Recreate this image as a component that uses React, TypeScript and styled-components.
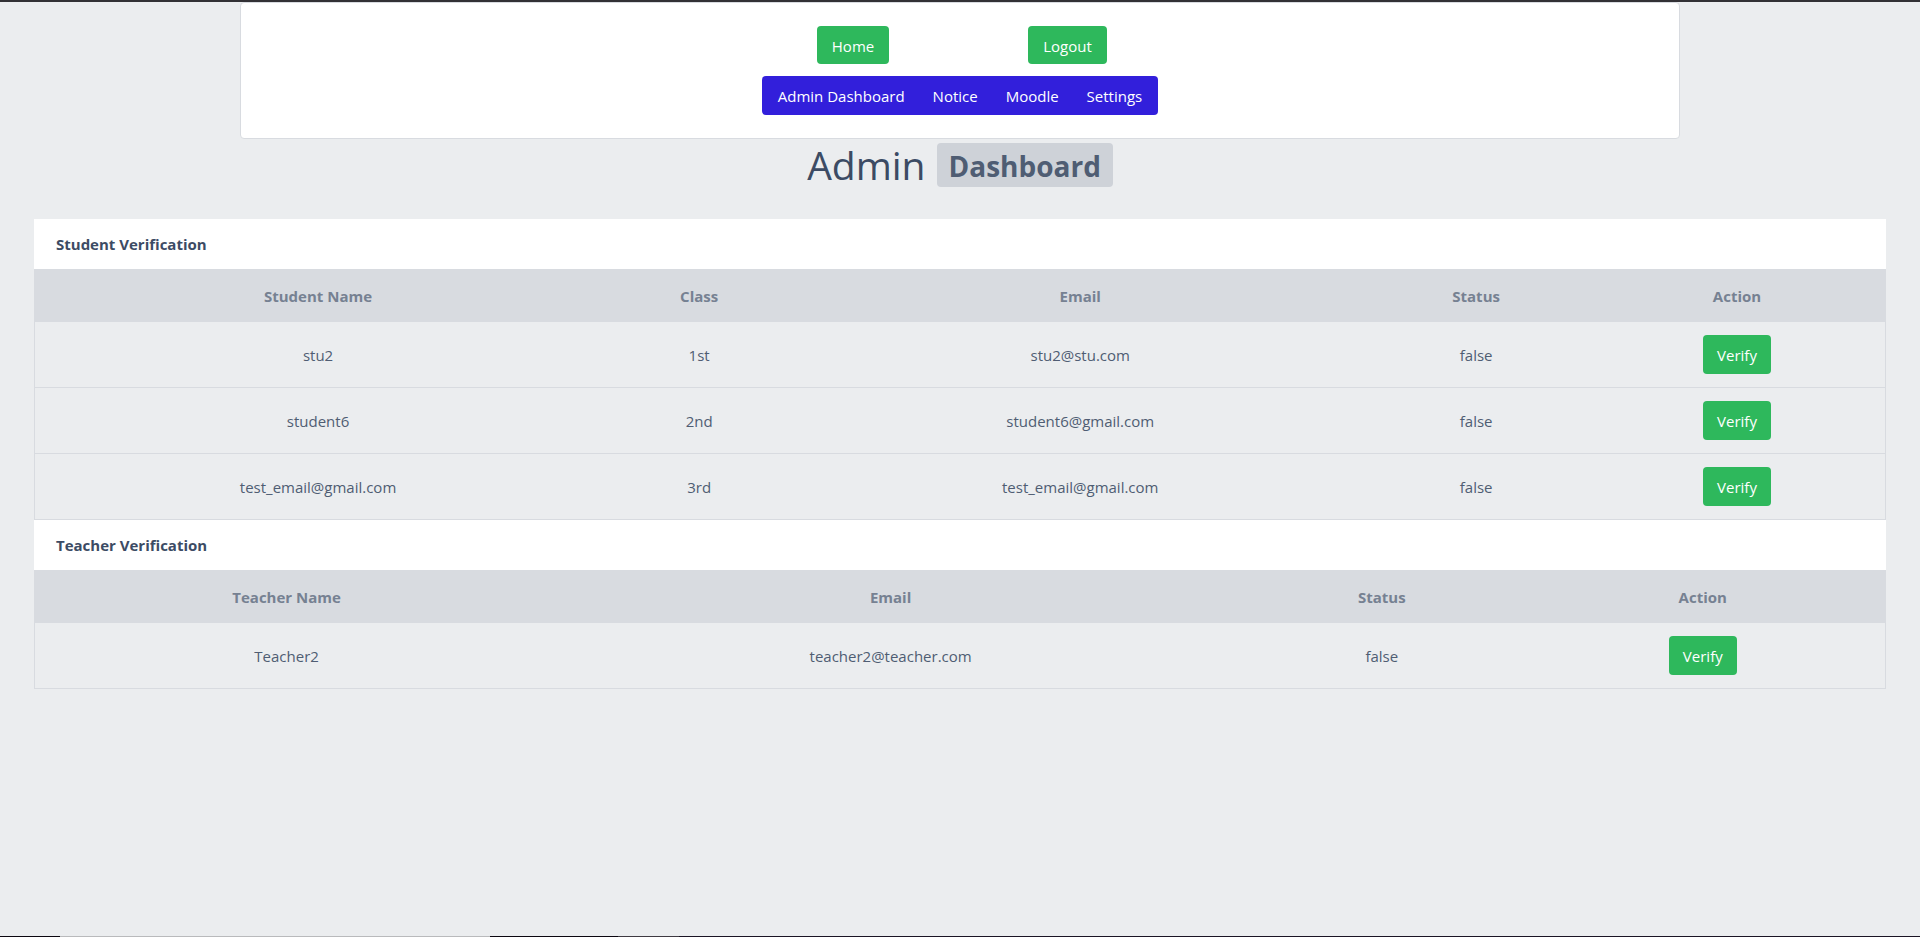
import React from "react";
import styled, { createGlobalStyle } from "styled-components";

const GlobalStyle = createGlobalStyle`
  *, *::before, *::after { box-sizing: border-box; }
  body {
    margin: 0;
    background: #ebedef;
    color: #4f5d73;
    font-family: "Segoe UI", "Open Sans", "Noto Sans", sans-serif;
    font-size: 15px;
    line-height: 24px;
  }
`;

const Page = styled.div`
  display: flex;
  flex-direction: column;
  min-height: 100vh;
`;

const TopEdge = styled.div`
  height: 2px;
  background: #323135;
`;

const Header = styled.header`
  width: 75%;
  margin: 0 auto;
  padding: 23px 20px;
  display: flex;
  flex-direction: column;
  align-items: center;
  gap: 12px;
  background: #fff;
  border: 1px solid #d8dbe0;
  border-radius: 4px;
`;

const SessionActions = styled.div`
  display: flex;
  gap: 139px;
  padding-left: 4px;
`;

const Button = styled.button<{ $width: number }>`
  width: ${({ $width }) => $width}px;
  height: 38px;
  padding: 1px 0 0;
  border: 0;
  border-radius: 4px;
  background: #2eb85c;
  color: #fff;
  font: inherit;
  white-space: nowrap;
  cursor: pointer;
`;

const VerifyButton = styled(Button)`
  height: 39px;
  padding: 0;
`;

const Nav = styled.nav`
  display: flex;
  height: 39px;
  padding: 0 2px;
  align-items: center;
  border-radius: 4px;
  background: #321fdb;
`;

const NavLink = styled.a`
  padding: 0 14px;
  color: #fff;
  text-decoration: none;
`;

const Title = styled.h1`
  display: flex;
  justify-content: center;
  gap: 11px;
  margin: 4px 0 32px;
  color: #3c4b64;
  font-size: 39px;
  font-weight: 500;
  line-height: 43px;
`;

const Badge = styled.span`
  padding: 2px 12px 0;
  border-radius: 4px;
  background: #ced2d8;
  color: #4f5d73;
  font-size: 28px;
  font-weight: 700;
  line-height: 42px;
`;

const Main = styled.main`
  flex: 1;
  padding: 0 34px;
`;

const SectionTitle = styled.h2`
  margin: 0;
  padding: 13px 22px;
  background: #fff;
  color: #3c4b64;
  font-size: 15px;
  font-weight: 700;
  line-height: 24px;
`;

const Table = styled.table`
  width: 100%;
  table-layout: fixed;
  border-collapse: separate;
  border-spacing: 0;
  border: 1px solid #d8dbe0;
  border-width: 0 1px;
  text-align: center;
`;

const Column = styled.col<{ $share: number }>`
  width: ${({ $share }) => $share}%;
`;

const HeadCell = styled.th`
  height: 53px;
  padding: 0 12px;
  background: #d8dbe0;
  color: #768192;
  font-weight: 700;
`;

const Cell = styled.td`
  height: 66px;
  padding: 0 12px;
  border-bottom: 1px solid #d8dbe0;
`;

const BottomEdge = styled.footer`
  display: flex;
  height: 1px;
`;

const EdgePart = styled.div<{ $color: string; $share: number }>`
  flex: ${({ $share }) => $share} 0 0;
  background: ${({ $color }) => $color};
`;

type VerificationProps = {
  title: string;
  columns: { label: string; share: number }[];
  rows: string[][];
};

function Verification({ title, columns, rows }: VerificationProps) {
  return (
    <section aria-label={title}>
      <SectionTitle>{title}</SectionTitle>
      <Table>
        <colgroup>
          {columns.map((c) => (
            <Column key={c.label} $share={c.share} />
          ))}
        </colgroup>
        <thead>
          <tr>
            {columns.map((c) => (
              <HeadCell key={c.label} scope="col">{c.label}</HeadCell>
            ))}
          </tr>
        </thead>
        <tbody>
          {rows.map((row) => (
            <tr key={row[0]}>
              {row.map((value, i) => (
                <Cell key={i}>{value}</Cell>
              ))}
              <Cell>
                <VerifyButton type="button" $width={68}>Verify</VerifyButton>
              </Cell>
            </tr>
          ))}
        </tbody>
      </Table>
    </section>
  );
}

const studentColumns = [
  { label: "Student Name", share: 30.6 },
  { label: "Class", share: 10.6 },
  { label: "Email", share: 30.6 },
  { label: "Status", share: 12.2 },
  { label: "Action", share: 16 },
];

const students = [
  ["stu2", "1st", "stu2@stu.com", "false"],
  ["student6", "2nd", "student6@gmail.com", "false"],
  ["test_email@gmail.com", "3rd", "test_email@gmail.com", "false"],
];

const teacherColumns = [
  { label: "Teacher Name", share: 27.2 },
  { label: "Email", share: 38.1 },
  { label: "Status", share: 15 },
  { label: "Action", share: 19.7 },
];

const teachers = [["Teacher2", "teacher2@teacher.com", "false"]];

export default function App() {
  return (
    <Page>
      <GlobalStyle />
      <TopEdge />
      <Header>
        <SessionActions>
          <Button type="button" $width={72}>Home</Button>
          <Button type="button" $width={79}>Logout</Button>
        </SessionActions>
        <Nav>
          <NavLink href="#dashboard">Admin Dashboard</NavLink>
          <NavLink href="#notice">Notice</NavLink>
          <NavLink href="#moodle">Moodle</NavLink>
          <NavLink href="#settings">Settings</NavLink>
        </Nav>
      </Header>
      <Title>
        Admin <Badge>Dashboard</Badge>
      </Title>
      <Main>
        <Verification title="Student Verification" columns={studentColumns} rows={students} />
        <Verification title="Teacher Verification" columns={teacherColumns} rows={teachers} />
      </Main>
      <BottomEdge>
        <EdgePart $color="#0b0710" $share={60} />
        <EdgePart $color="#b9babc" $share={430} />
        <EdgePart $color="#0b0710" $share={128} />
        <EdgePart $color="#3e3a42" $share={61} />
        <EdgePart $color="#1a1424" $share={1241} />
      </BottomEdge>
    </Page>
  );
}
